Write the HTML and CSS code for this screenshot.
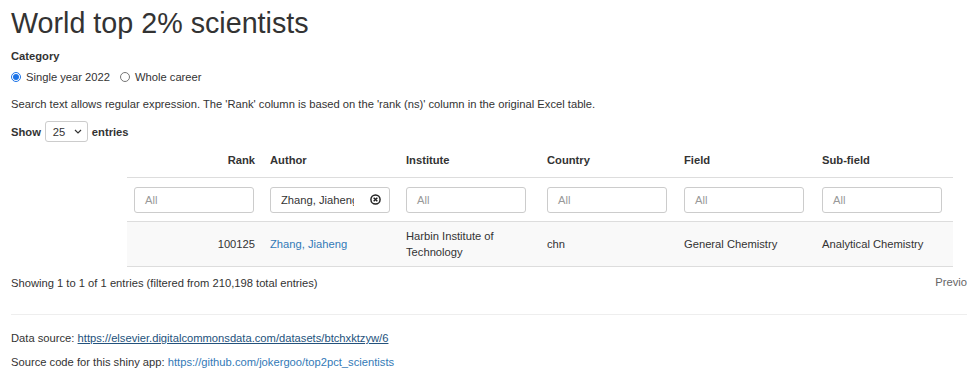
FILE: index.html
```html
<!DOCTYPE html>
<html lang="en">
<head>
    <meta charset="UTF-8">
    <meta name="viewport" content="width=device-width, initial-scale=1.0">
    <title>World top 2% scientists</title>
    <link rel="stylesheet" href="styles.css">
</head>
<body>
    <div class="container">
        <h1>World top 2% scientists</h1>

        <div class="form-group">
            <label class="control-label">Category</label>
            <div class="radios">
                <label class="radio"><input type="radio" name="category" checked> Single year 2022</label>
                <label class="radio"><input type="radio" name="category"> Whole career</label>
            </div>
        </div>

        <p class="note">Search text allows regular expression. The 'Rank' column is based on the 'rank (ns)' column in the original Excel table.</p>

        <div class="length">
            <b>Show</b>
            <span class="select">25
                <svg width="8" height="5" viewBox="0 0 8 5"><path d="M1 1 L4 4 L7 1" fill="none" stroke="#333" stroke-width="1.2"/></svg>
            </span>
            <b>entries</b>
        </div>

        <table class="results">
            <colgroup>
                <col style="width:136px">
                <col style="width:136px">
                <col style="width:141px">
                <col style="width:137px">
                <col style="width:138px">
                <col style="width:138px">
            </colgroup>
            <thead>
                <tr class="head">
                    <th class="num">Rank</th>
                    <th>Author</th>
                    <th>Institute</th>
                    <th>Country</th>
                    <th>Field</th>
                    <th>Sub-field</th>
                </tr>
                <tr class="filters">
                    <td><div class="filter placeholder">All</div></td>
                    <td>
                        <div class="filter filled">
                            <span class="value">Zhang, Jiaheng</span>
                            <svg class="clear" width="11" height="11" viewBox="0 0 12 12">
                                <circle cx="6" cy="6" r="5" fill="none" stroke="#222" stroke-width="1.6"/>
                                <path d="M4 4 L8 8 M8 4 L4 8" stroke="#222" stroke-width="1.6"/>
                            </svg>
                        </div>
                    </td>
                    <td><div class="filter placeholder">All</div></td>
                    <td><div class="filter placeholder">All</div></td>
                    <td><div class="filter placeholder">All</div></td>
                    <td><div class="filter placeholder">All</div></td>
                </tr>
            </thead>
            <tbody>
                <tr class="odd">
                    <td class="num">100125</td>
                    <td><a href="#">Zhang, Jiaheng</a></td>
                    <td>Harbin Institute of Technology</td>
                    <td>chn</td>
                    <td>General Chemistry</td>
                    <td>Analytical Chemistry</td>
                </tr>
            </tbody>
        </table>

        <div class="table-footer">
            <div class="info">Showing 1 to 1 of 1 entries (filtered from 210,198 total entries)</div>
            <div class="paginate">
                <span class="page-btn disabled">Previous</span>
                <span class="page-btn current">1</span>
                <span class="page-btn disabled">Next</span>
            </div>
        </div>

        <hr>

        <p class="source">Data source: <a class="visited" href="#">https://elsevier.digitalcommonsdata.com/datasets/btchxktzyw/6</a></p>
        <p class="source">Source code for this shiny app: <a href="#">https://github.com/jokergoo/top2pct_scientists</a></p>
    </div>
</body>
</html>
```

FILE: styles.css
```css
html {
    overflow: hidden;
}
body {
    margin: 0;
    font-family: "Liberation Sans", Arial, Helvetica, sans-serif;
    font-size: 11.2px;
    line-height: 16px;
    color: #333;
    background: #fff;
}
a {
    color: #337ab7;
    text-decoration: none;
}
a.visited {
    color: #23527c;
    text-decoration: underline;
}
.container {
    width: 1058px;
    padding-left: 11px;
}
h1 {
    font-size: 28.7px;
    font-weight: 500;
    line-height: 31px;
    margin: 8px 0 9px;
    color: #333;
}
.control-label {
    display: block;
    font-weight: bold;
    margin-bottom: 5px;
}
.radios {
    display: flex;
    gap: 10px;
}
.radio {
    display: flex;
    align-items: center;
    gap: 5px;
}
.radio input {
    width: 10px;
    height: 10px;
    margin: 0;
    accent-color: #1a73e8;
}
.note {
    margin: 11px 0 9px;
}
.length {
    display: flex;
    align-items: center;
    gap: 4px;
    height: 21px;
}
.select {
    display: inline-flex;
    align-items: center;
    justify-content: space-between;
    box-sizing: border-box;
    width: 43px;
    height: 21px;
    padding: 0 5px 0 7px;
    border: 1px solid #ccc;
    border-radius: 3px;
}
.results {
    table-layout: fixed;
    width: 826px;
    margin: 1px auto 0 116px;
    border-collapse: collapse;
}
.results th,
.results td {
    padding: 0 7px;
    text-align: left;
    vertical-align: middle;
}
.results .num {
    text-align: right;
    padding-right: 8px;
}
.head th {
    height: 34px;
    border-bottom: 1px solid #ddd;
    font-weight: bold;
}
.filters td {
    height: 43px;
    border-bottom: 1px solid #ddd;
}
.filter {
    display: flex;
    align-items: center;
    justify-content: space-between;
    box-sizing: border-box;
    width: 120px;
    height: 26px;
    padding: 0 8px 0 10px;
    border: 1px solid #ccc;
    border-radius: 3px;
    background: #fff;
}
.placeholder {
    color: #999;
}
.value {
    width: 73px;
    overflow: hidden;
    white-space: nowrap;
}
.odd td {
    height: 44px;
    background: #f9f9f9;
    border-bottom: 1px solid #ddd;
}
.table-footer {
    display: flex;
    justify-content: space-between;
    align-items: center;
    margin-top: 8px;
    height: 16px;
}
.paginate {
    display: flex;
    gap: 2px;
}
.page-btn {
    padding: 0 11px;
    color: #666;
}
.page-btn.current {
    border: 1px solid #ccc;
    border-radius: 2px;
}
hr {
    border: 0;
    border-top: 1px solid #eee;
    margin: 23px 0 15px;
}
.source {
    margin: 0 0 8px;
}
```
